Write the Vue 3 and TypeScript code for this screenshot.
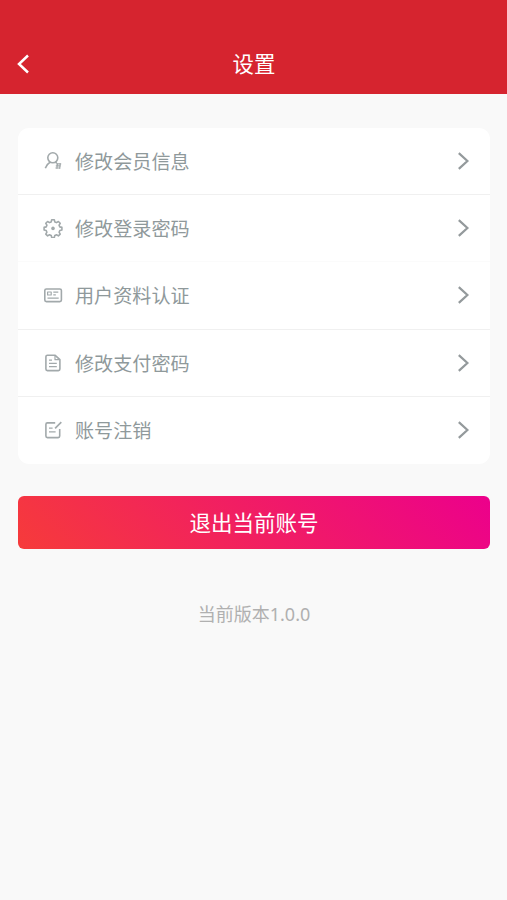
<script setup lang="ts">
type IconName = 'user' | 'gear' | 'card' | 'document' | 'edit'

interface MenuItem {
  icon: IconName
  label: string
}

const items: MenuItem[] = [
  { icon: 'user', label: '修改会员信息' },
  { icon: 'gear', label: '修改登录密码' },
  { icon: 'card', label: '用户资料认证' },
  { icon: 'document', label: '修改支付密码' },
  { icon: 'edit', label: '账号注销' },
]
</script>

<template>
  <div class="page">
    <header class="header">
      <button class="back" aria-label="返回">
        <svg width="14" height="22" viewBox="0 0 14 22">
          <path d="M12 2.500 3 11l9 8.500" />
        </svg>
      </button>
      <h1 class="title">设置</h1>
    </header>

    <main class="content">
      <ul class="menu">
        <li v-for="item in items" :key="item.icon" class="row">
          <svg class="icon" width="20" height="20" viewBox="0 0 20 20">
            <template v-if="item.icon === 'user'">
              <circle cx="9.800" cy="6.800" r="5" />
              <path d="M7 11.200c-2.200 1.300-3.700 3.200-4.700 6M12.300 11.200l1.500 1" />
              <path d="M13.200 12.800h5M12.800 14.900h5M12.400 17h5M14.600 12.200l-.8 5.600M17.400 12.200l-.8 5.600" class="thin" />
            </template>
            <template v-else-if="item.icon === 'gear'">
              <path d="M8.700 1.800h2.600l.5 2.100 1.700.7 1.900-1.100 1.800 1.800-1.100 1.900.7 1.700 2.100.5v2.600l-2.100.5-.7 1.700 1.100 1.900-1.800 1.800-1.900-1.100-1.700.7-.5 2.100H8.700l-.5-2.100-1.700-.7-1.900 1.100-1.800-1.800 1.100-1.900-.7-1.700-2.100-.5V9.400l2.100-.5.700-1.700-1.100-1.900 1.800-1.800 1.900 1.100 1.700-.7z" />
              <circle cx="10" cy="10.400" r="1.800" class="solid" />
            </template>
            <template v-else-if="item.icon === 'card'">
              <rect x="1.800" y="4" width="16.600" height="12.600" rx="1.600" />
              <path d="M4.600 7h3.600v3H4.600zM10.300 7.200h5M10.300 9.800h2.500M4.500 13.200h11.200" class="thin" />
            </template>
            <template v-else-if="item.icon === 'document'">
              <path d="M4.400 2.300h7.800l4.700 4.400v9.400c0 .9-.6 1.500-1.500 1.500h-11c-.9 0-1.500-.6-1.500-1.500V3.800c0-.9.600-1.500 1.500-1.500z" />
              <path d="M12 2.700v4h4.500" class="thin" />
              <path d="M6 7.100h3M6 10.400h7.800M6 13.700h7.800" class="thin" />
            </template>
            <template v-else>
              <path d="M12.200 2.900H4.400c-.9 0-1.500.6-1.500 1.500v11.700c0 .9.600 1.500 1.500 1.500h10.800c.9 0 1.500-.6 1.500-1.500V8.900" />
              <path d="M18.300 2.100l-6.200 6.300" />
              <path d="M6 8.100h3.600M6 11.900h6.600" class="thin" />
            </template>
          </svg>
          <span class="label">{{ item.label }}</span>
          <svg class="arrow" width="14" height="20" viewBox="0 0 14 20">
            <path d="M2.800 2.100l8.600 7.900-8.600 7.900" />
          </svg>
        </li>
      </ul>

      <button class="logout">退出当前账号</button>
      <p class="version">当前版本1.0.0</p>
    </main>
  </div>
</template>

<style>
body {
  background: #f9f9f9;
}
</style>

<style scoped>
.page {
  box-sizing: border-box;
  min-height: 900px;
  background: #f9f9f9;
  font-family: "Noto Sans CJK SC", sans-serif;
}

.header {
  box-sizing: border-box;
  height: 94px;
  padding: 34px 15px 0 16px;
  display: grid;
  grid-template-columns: 14px 1fr 14px;
  align-items: center;
  background: #d6242f;
  color: #fff;
}

.back {
  display: flex;
  padding: 0;
  border: 0;
  background: none;
}

.back path {
  fill: none;
  stroke: #fff;
  stroke-width: 2.5;
}

.title {
  margin: 0;
  padding-bottom: 2px;
  text-align: center;
  font-size: 21.400px;
  line-height: 30px;
  font-weight: 400;
}

.content {
  padding: 34px 17px 0 18px;
}

.menu {
  margin: 0;
  padding: 0;
  list-style: none;
  overflow: hidden;
  border-radius: 11px;
  background: #fff;
}

.row {
  box-sizing: border-box;
  height: 67.200px;
  padding: 0 20px 0 25px;
  display: flex;
  align-items: center;
  border-bottom: 1px solid #f0f0f0;
}

.row:nth-child(2) {
  border-bottom-color: #fbfbfb;
}

.row:last-child {
  border-bottom-color: transparent;
}

.icon {
  flex: none;
  fill: none;
  stroke: #a2a9ab;
  stroke-width: 1.6;
  stroke-linejoin: round;
}

.icon .thin {
  stroke-width: 1.2;
}

.icon .solid {
  fill: #a2a9ab;
  stroke: none;
}

.label {
  flex: 1;
  margin-left: 12px;
  font-size: 19.100px;
  line-height: 28px;
  color: #8f999b;
}

.arrow {
  flex: none;
  fill: none;
  stroke: #949a9c;
  stroke-width: 2.2;
}

.logout {
  display: block;
  width: 100%;
  height: 53.500px;
  margin: 32px 0 0;
  padding: 0 0 2px;
  border: 0;
  border-radius: 6px;
  background: linear-gradient(45deg, #f63b3a, #ec008c);
  color: #fff;
  font-family: inherit;
  font-size: 21.500px;
  line-height: 51px;
}

.version {
  margin: 52px 0 0;
  text-align: center;
  font-family: "Noto Sans", "Noto Sans CJK SC", sans-serif;
  font-size: 18px;
  line-height: 26px;
  color: #b0b0b0;
}
</style>
